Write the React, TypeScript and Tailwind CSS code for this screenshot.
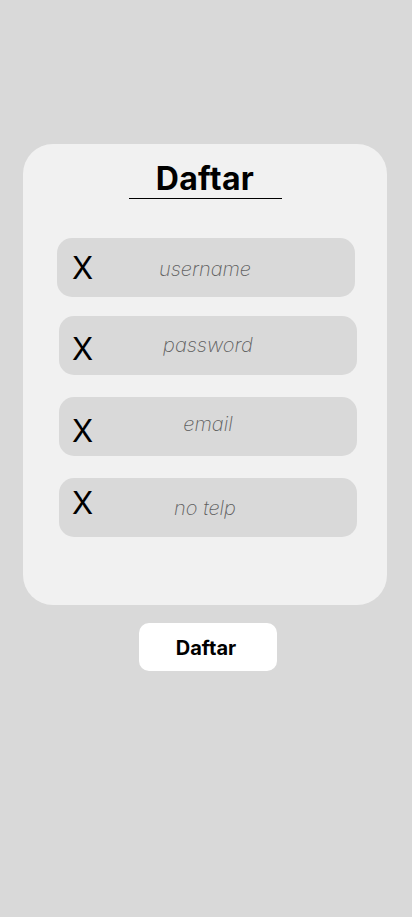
const fields = [
  { label: 'username', box: 'ml-[34px]', mt: 'mt-[39px]', x: 'ml-[15px] translate-y-0', ph: 'translate-y-[1px] -translate-x-[1px]' },
  { label: 'password', box: 'ml-[36px]', mt: 'mt-[19px]', x: 'ml-[13px] translate-y-[3px]', ph: '-translate-y-[1px]' },
  { label: 'email', box: 'ml-[36px]', mt: 'mt-[22px]', x: 'ml-[13px] translate-y-[4px]', ph: '-translate-y-[3px]' },
  { label: 'no telp', box: 'ml-[36px]', mt: 'mt-[22px]', x: 'ml-[13px] -translate-y-[5px]', ph: 'translate-y-0 -translate-x-[3px]' },
]

export default function App() {
  return (
    <div className="min-h-[917px] w-full bg-[#d9d9d9] pt-[144px] font-['Inter',sans-serif]">
      <div className="ml-[23px] flex h-[461px] w-[364px] flex-col rounded-[30px] bg-[#f1f1f1] pt-[19px]">
        <div className="flex flex-col items-center">
          <h1 className="text-[32px] leading-8 font-bold tracking-[0.3px] text-black">Daftar</h1>
          <div className="mt-[3px] h-px w-[153px] bg-black" />
        </div>

        {fields.map((f) => (
          <div
            key={f.label}
            className={`${f.box} ${f.mt} grid h-[59px] w-[298px] items-center rounded-[15px] bg-[#d9d9d9]`}
          >
            <span
              className={`${f.x} [grid-area:1/1] justify-self-start text-[31px] leading-none font-normal text-black`}
            >
              X
            </span>
            <span
              className={`${f.ph} [grid-area:1/1] justify-self-center text-[20px] leading-none font-extralight italic text-[#5f5f5f]`}
            >
              {f.label}
            </span>
          </div>
        ))}
      </div>

      <button className="mt-[18px] ml-[139px] flex h-[48px] w-[138px] items-center justify-center rounded-[10px] bg-white text-[20px] font-bold text-black">
        <span className="-translate-x-[2px] translate-y-[1px]">Daftar</span>
      </button>
    </div>
  )
}
